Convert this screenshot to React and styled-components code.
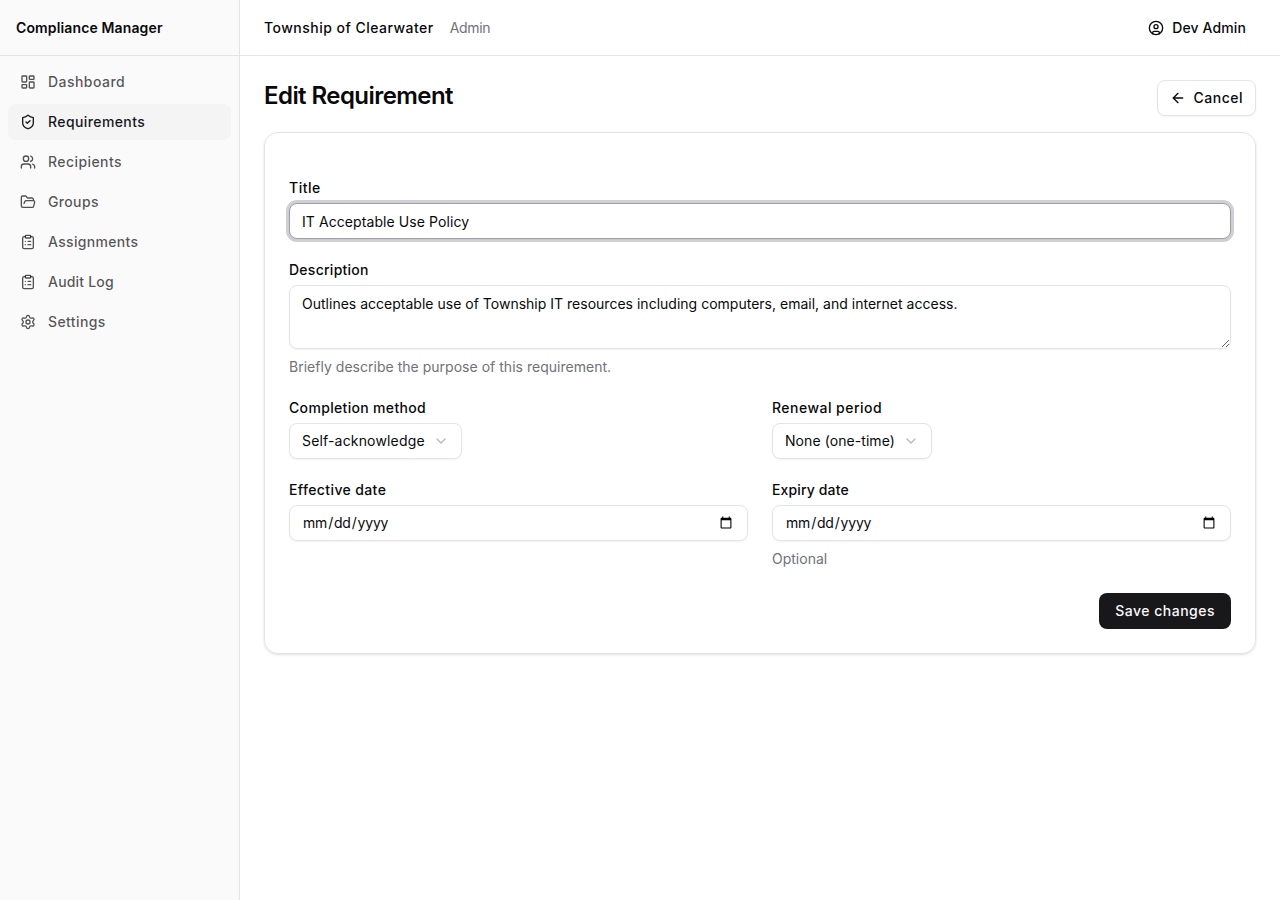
import React from 'react';
import styled, { createGlobalStyle, css } from 'styled-components';
import {
  LayoutDashboard, ShieldCheck, Users, FolderOpen, ClipboardList,
  Settings, CircleUser, ArrowLeft, ChevronDown,
} from 'lucide-react';

const Global = createGlobalStyle`
  *, *::before, *::after { box-sizing: border-box; }
  body {
    margin: 0;
    background: #fff;
    color: #09090b;
    font-family: Inter, sans-serif;
    font-size: 14px;
    line-height: 20px;
  }
  h1, p { margin: 0; }
  button, input, textarea { font: inherit; color: inherit; letter-spacing: inherit; }
`;

const tracking = css`
  letter-spacing: ${(p) => p.$track || 0}px;
`;

const Shell = styled.div`
  display: flex;
  min-height: 100vh;
`;

const Sidebar = styled.aside`
  width: 240px;
  flex-shrink: 0;
  background: #fafafa;
  border-right: 1px solid #e4e4e7;
`;

const Brand = styled.div`
  height: 56px;
  display: flex;
  align-items: center;
  padding: 0 16px;
  border-bottom: 1px solid #e4e4e7;
  font-weight: 600;
  letter-spacing: 0.13px;
`;

const Nav = styled.nav`
  display: flex;
  flex-direction: column;
  gap: 4px;
  padding: 8px;
`;

const NavItem = styled.a`
  ${tracking}
  display: flex;
  align-items: center;
  gap: 12px;
  height: 36px;
  padding: 0 12px;
  border-radius: 8px;
  font-weight: 500;
  color: ${(p) => (p.$active ? '#18181b' : 'rgba(9, 9, 11, 0.7)')};
  background: ${(p) => (p.$active ? '#f4f4f5' : 'transparent')};
`;

const Column = styled.div`
  flex: 1;
  min-width: 0;
`;

const TopBar = styled.header`
  height: 56px;
  display: flex;
  align-items: center;
  justify-content: space-between;
  padding: 0 24px;
  border-bottom: 1px solid #e4e4e7;
`;

const Org = styled.div`
  display: flex;
  gap: 16px;
  font-weight: 500;
  letter-spacing: 0.48px;
`;

const Role = styled.span`
  font-weight: 400;
  letter-spacing: -0.3px;
  color: #71717a;
`;

const UserButton = styled.button`
  ${tracking}
  display: flex;
  align-items: center;
  gap: 8px;
  padding: 0 10px;
  height: 32px;
  border: 0;
  background: none;
  font-weight: 500;
`;

const Main = styled.main`
  display: flex;
  flex-direction: column;
  gap: 16px;
  padding: 24px;
`;

const Heading = styled.div`
  display: flex;
  justify-content: space-between;
  align-items: flex-start;
`;

const PageTitle = styled.h1`
  font-size: 24px;
  line-height: 32px;
  font-weight: 600;
  letter-spacing: -0.56px;
`;

const Button = styled.button`
  display: inline-flex;
  align-items: center;
  gap: 8px;
  height: 36px;
  border-radius: 8px;
  font-weight: 500;
  letter-spacing: 0.5px;
  ${(p) => (p.$primary ? css`
    padding: 0 16px;
    border: 0;
    background: #18181b;
    color: #fafafa;
  ` : css`
    padding: 0 12px;
    border: 1px solid #e4e4e7;
    background: #fff;
    box-shadow: 0 1px 2px rgba(0, 0, 0, 0.05);
  `)}
`;

const Card = styled.section`
  border: 1px solid #e4e4e7;
  border-radius: 14px;
  padding: 48px 24px 24px;
  box-shadow: 0 1px 3px rgba(0, 0, 0, 0.1), 0 1px 2px -1px rgba(0, 0, 0, 0.1);
`;

const Form = styled.form`
  display: flex;
  flex-direction: column;
  gap: 24px;
`;

const Field = styled.div`
  display: flex;
  flex-direction: column;
  align-items: flex-start;
  gap: 8px;
`;

const Label = styled.label`
  ${tracking}
  line-height: 14px;
  font-weight: 500;
`;

const control = css`
  border: 1px solid #e4e4e7;
  border-radius: 8px;
  background: #fff;
  box-shadow: 0 1px 2px rgba(0, 0, 0, 0.05);
  outline: none;
`;

const Input = styled.input`
  ${control}
  ${tracking}
  width: 100%;
  height: 36px;
  padding: 4px 12px;
  ${(p) => p.$focused && css`
    border-color: #9f9fa9;
    box-shadow: 0 0 0 3px rgba(159, 159, 169, 0.5), 0 1px 2px rgba(0, 0, 0, 0.05);
  `}
`;

const TextArea = styled.textarea`
  ${control}
  display: block;
  width: 100%;
  height: 64px;
  padding: 8px 12px;
  resize: vertical;
  letter-spacing: 0.01px;
`;

const Select = styled.button`
  ${control}
  ${tracking}
  display: flex;
  align-items: center;
  gap: 8px;
  height: 36px;
  padding: 0 12px;
`;

const Hint = styled.p`
  ${tracking}
  color: #71717a;
`;

const Pair = styled.div`
  display: grid;
  grid-template-columns: 1fr 1fr;
  gap: 24px;
`;

const Actions = styled.div`
  display: flex;
  justify-content: flex-end;
`;

const links = [
  { name: 'Dashboard', Icon: LayoutDashboard, track: 0.46 },
  { name: 'Requirements', Icon: ShieldCheck, track: 0.4 },
  { name: 'Recipients', Icon: Users, track: 0.42 },
  { name: 'Groups', Icon: FolderOpen, track: 0.35 },
  { name: 'Assignments', Icon: ClipboardList, track: 0.31 },
  { name: 'Audit Log', Icon: ClipboardList, track: 0.2 },
  { name: 'Settings', Icon: Settings, track: 0.4 },
];

export default function App() {
  return (
    <Shell>
      <Global />
      <Sidebar>
        <Brand>Compliance Manager</Brand>
        <Nav>
          {links.map(({ name, Icon, track }) => (
            <NavItem key={name} $active={name === 'Requirements'} $track={track}>
              <Icon size={16} />
              {name}
            </NavItem>
          ))}
        </Nav>
      </Sidebar>
      <Column>
        <TopBar>
          <Org>Township of Clearwater <Role>Admin</Role></Org>
          <UserButton $track={0.11}><CircleUser size={16} />Dev Admin</UserButton>
        </TopBar>
        <Main>
          <Heading>
            <PageTitle>Edit Requirement</PageTitle>
            <Button><ArrowLeft size={16} />Cancel</Button>
          </Heading>
          <Card>
            <Form onSubmit={(e) => e.preventDefault()}>
              <Field>
                <Label htmlFor="title" $track={0.5}>Title</Label>
                <Input id="title" $focused $track={0.08} defaultValue="IT Acceptable Use Policy" />
              </Field>
              <Field>
                <Label htmlFor="description" $track={0.26}>Description</Label>
                <TextArea
                  id="description"
                  defaultValue="Outlines acceptable use of Township IT resources including computers, email, and internet access."
                />
                <Hint $track={0.02}>Briefly describe the purpose of this requirement.</Hint>
              </Field>
              <Pair>
                <Field>
                  <Label $track={0.33}>Completion method</Label>
                  <Select type="button" $track={0.17}>Self-acknowledge<ChevronDown size={16} color="#b8b8bd" /></Select>
                </Field>
                <Field>
                  <Label $track={0.47}>Renewal period</Label>
                  <Select type="button" $track={0.07}>None (one-time)<ChevronDown size={16} color="#b8b8bd" /></Select>
                </Field>
              </Pair>
              <Pair>
                <Field>
                  <Label htmlFor="effective" $track={0.38}>Effective date</Label>
                  <Input id="effective" type="date" $track={-0.2} />
                </Field>
                <Field>
                  <Label htmlFor="expiry" $track={0.14}>Expiry date</Label>
                  <Input id="expiry" type="date" $track={-0.2} />
                  <Hint>Optional</Hint>
                </Field>
              </Pair>
              <Actions><Button $primary>Save changes</Button></Actions>
            </Form>
          </Card>
        </Main>
      </Column>
    </Shell>
  );
}
